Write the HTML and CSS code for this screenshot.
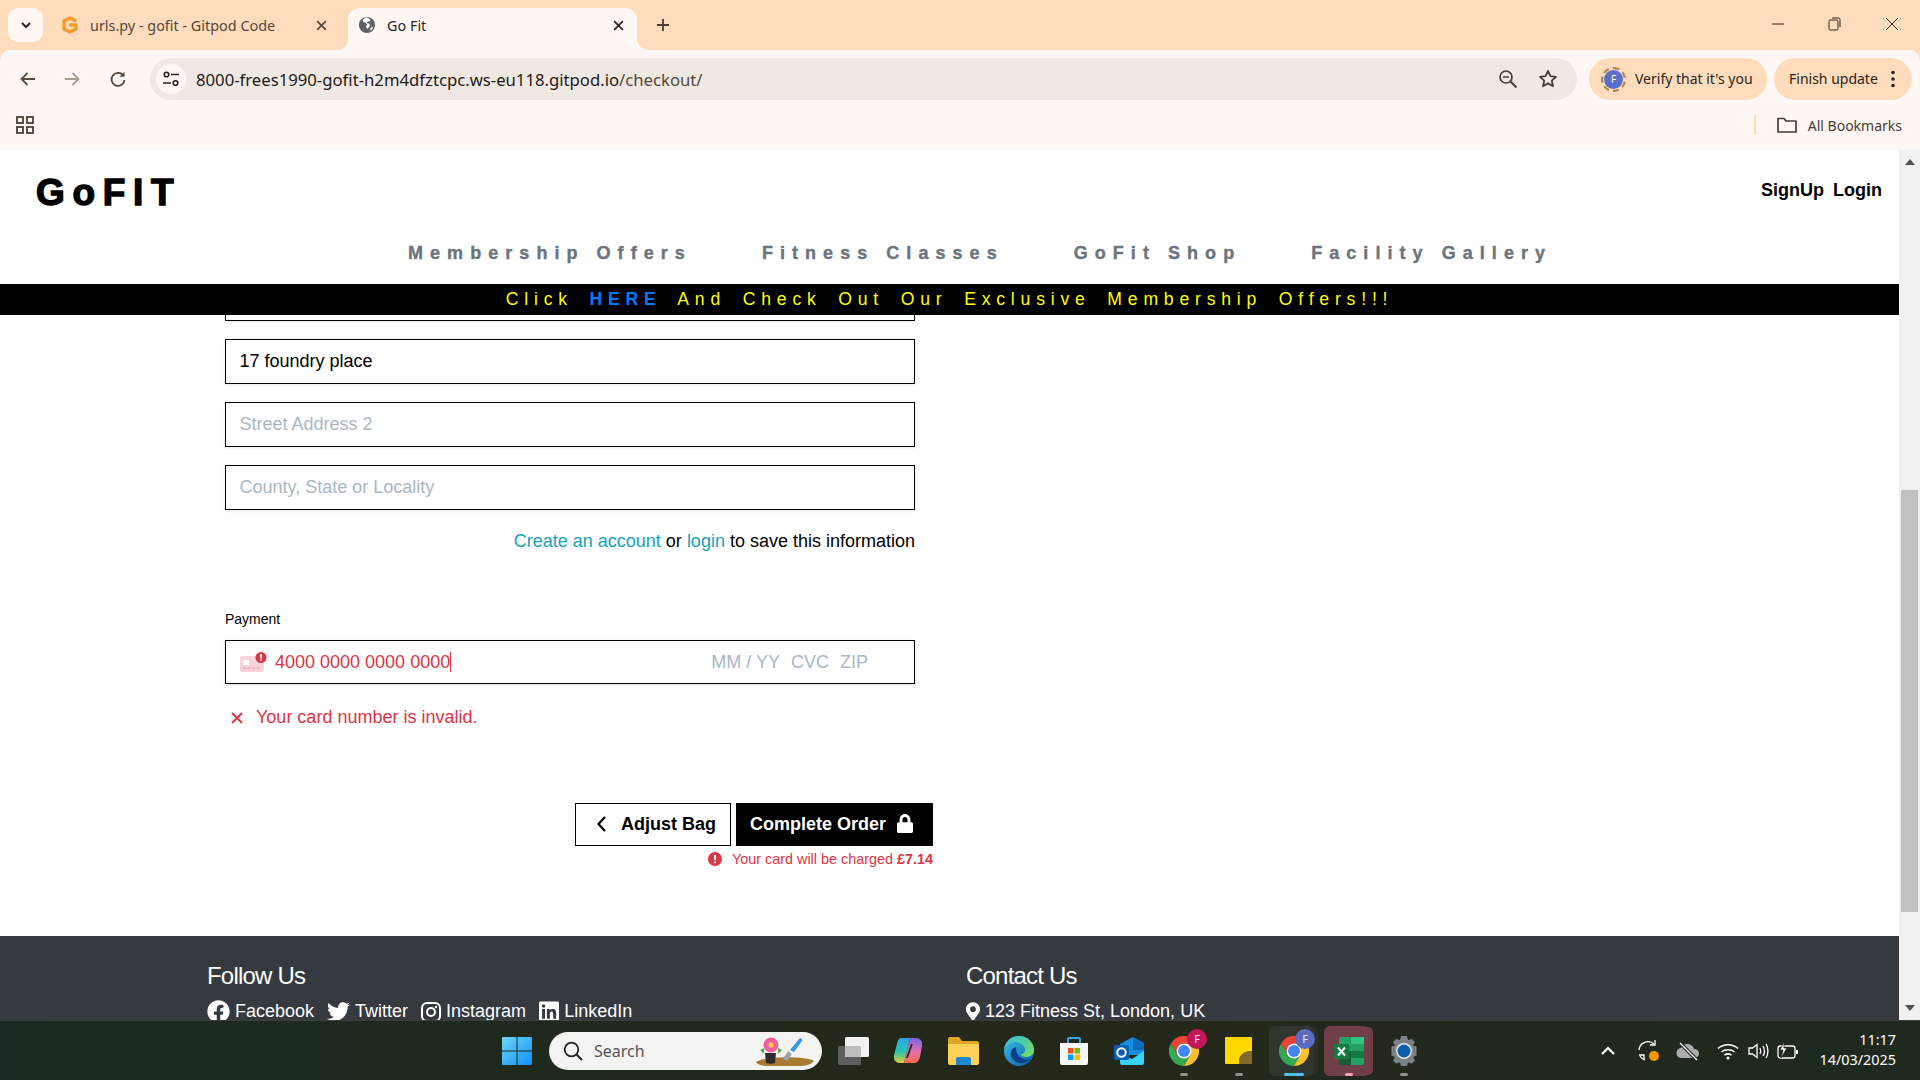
FILE: index.html
```html
<!DOCTYPE html>
<html lang="en">
<head>
<meta charset="utf-8">
<title>Go Fit</title>
<link rel="stylesheet" href="styles.css">
</head>
<body>
<div class="browser">
  <div class="tabstrip">
    <div class="tab-search"><svg width="14" height="14" viewBox="0 0 14 14"><path d="M3 5l4 4 4-4" fill="none" stroke="#2b2320" stroke-width="2"/></svg></div>
    <div class="tab tab-inactive">
      <svg class="favicon favicon-gitpod" viewBox="0 0 18 20"><path d="M14 5.500L9 3 3 6v8l6 3 6-3v-4H9.500" fill="none" stroke="#f79a2e" stroke-width="3.400" stroke-linejoin="round" stroke-linecap="round"/></svg>
      <span class="tab-title tab-title-dim">urls.py - gofit - Gitpod Code</span>
      <svg class="tab-close" viewBox="0 0 12 12"><path d="M2 2l8 8M10 2l-8 8" stroke="#5a4a3c" stroke-width="1.600"/></svg>
    </div>
    <div class="tab tab-active">
      <svg class="favicon" viewBox="0 0 20 20"><circle cx="10" cy="10" r="9" fill="#5f6368"/><path d="M10 1.500c-2 .6-4 1.600-5 3.200l1.200 2.300 2.500.6 1.300 2-1 2 1 2.500 1.500-.8 2-3-1-1.600-2.500-.8.800-1.700 2-.4 1.200-1.600zM15 12l1.800 1c-.6 1.400-1.600 2.500-2.800 3.300l-.4-2z" fill="#fff"/></svg>
      <span class="tab-title">Go Fit</span>
      <svg class="tab-close" viewBox="0 0 12 12"><path d="M2 2l8 8M10 2l-8 8" stroke="#2b2320" stroke-width="1.600"/></svg>
    </div>
    <svg class="new-tab" viewBox="0 0 14 14"><path d="M7 1v12M1 7h12" stroke="#4a3d33" stroke-width="1.800"/></svg>
    <div class="win-controls">
      <svg class="win-btn" viewBox="0 0 16 16"><path d="M2 8h12" stroke="#2b2320" stroke-width="1"/></svg>
      <svg class="win-btn" viewBox="0 0 16 16"><rect x="3" y="4" width="9" height="10" rx="1.500" fill="none" stroke="#2b2320"/><path d="M6 2h6.500A1.500 1.500 0 0 1 14 3.500V11" fill="none" stroke="#2b2320"/></svg>
      <svg class="win-btn" viewBox="0 0 16 16"><path d="M2 2l12 12M14 2L2 14" stroke="#2b2320" stroke-width="1"/></svg>
    </div>
  </div>
  <div class="toolbar">
    <div class="nav-btn"><svg width="18" height="18" viewBox="0 0 18 18"><path d="M16 9H3M8.500 3L2.500 9l6 6" fill="none" stroke="#5a4a3c" stroke-width="1.800"/></svg></div>
    <div class="nav-btn"><svg width="18" height="18" viewBox="0 0 18 18"><path d="M2 9h13M9.500 3l6 6-6 6" fill="none" stroke="#a99c92" stroke-width="1.800"/></svg></div>
    <div class="nav-btn nav-reload"><svg width="18" height="18" viewBox="0 0 18 18"><path d="M14.600 6A6.500 6.500 0 1 0 15.500 10" fill="none" stroke="#5a4a3c" stroke-width="1.800"/><path d="M15.500 1.800v5h-5z" fill="#5a4a3c"/></svg></div>
    <div class="omnibox">
      <div class="site-info"><svg width="18" height="18" viewBox="0 0 18 18"><circle cx="4.500" cy="4.500" r="2.300" fill="none" stroke="#2b2320" stroke-width="1.600"/><path d="M9 4.500h8M1 13h8" stroke="#2b2320" stroke-width="1.600"/><circle cx="13.500" cy="13" r="2.300" fill="none" stroke="#2b2320" stroke-width="1.600"/></svg></div>
      <span class="url">8000-frees1990-gofit-h2m4dfztcpc.ws-eu118.gitpod.io<span class="url-path">/checkout/</span></span>
      <svg class="omni-zoom" width="20" height="20" viewBox="0 0 20 20"><circle cx="8" cy="8" r="6" fill="none" stroke="#4a3d33" stroke-width="1.700"/><path d="M12.500 12.500l6 6" stroke="#4a3d33" stroke-width="1.900"/><path d="M5 8h6" stroke="#4a3d33" stroke-width="1.500"/></svg>
      <svg class="omni-star" width="20" height="20" viewBox="0 0 20 20"><path d="M10 2l2.400 5.200 5.600.6-4.200 3.800 1.200 5.600L10 14.400l-5 2.800 1.200-5.600L2 7.800l5.600-.6z" fill="none" stroke="#4a3d33" stroke-width="1.800" stroke-linejoin="round"/></svg>
    </div>
    <div class="pill pill-verify">
      <div class="avatar-ring"><span class="avatar">F</span></div>
      <span>Verify that it's you</span>
    </div>
    <div class="pill pill-update">
      <span>Finish update</span>
      <svg width="4" height="18" viewBox="0 0 4 18"><circle cx="2" cy="2.500" r="1.800" fill="#2b2320"/><circle cx="2" cy="9" r="1.800" fill="#2b2320"/><circle cx="2" cy="15.500" r="1.800" fill="#2b2320"/></svg>
    </div>
  </div>
  <div class="bookmarks">
    <svg width="18" height="18" viewBox="0 0 18 18"><g fill="none" stroke="#4a3d33" stroke-width="1.800"><rect x="1" y="1" width="6" height="6"/><rect x="11" y="1" width="6" height="6"/><rect x="1" y="11" width="6" height="6"/><rect x="11" y="11" width="6" height="6"/></g></svg>
    <div class="bm-divider"></div>
    <svg class="bm-folder" width="20" height="18" viewBox="0 0 20 18"><path d="M1 16V2.500h6l2 2.500h10v11z" fill="none" stroke="#4a3d33" stroke-width="1.700" stroke-linejoin="round"/></svg>
    <span class="bm-text">All Bookmarks</span>
  </div>
</div>

<div class="viewport">
  <div class="page">
    <header class="site-header">
      <div class="header-top">
        <a class="logo">GoFIT</a>
        <div class="account-links"><a>SignUp</a><a>Login</a></div>
      </div>
      <nav class="site-nav">
        <a>Membership Offers</a>
        <a>Fitness Classes</a>
        <a>GoFit Shop</a>
        <a>Facility Gallery</a>
      </nav>
      <div class="promo">Click <strong>HERE</strong> And Check Out Our Exclusive Membership Offers!!!</div>
    </header>
    <main class="content">
      <form class="checkout">
        <input class="field field-clipped" type="text" value="">
        <input class="field" type="text" value="17 foundry place">
        <input class="field" type="text" placeholder="Street Address 2">
        <input class="field" type="text" placeholder="County, State or Locality">
        <p class="save-note"><a>Create an account</a> or <a>login</a> to save this information</p>
        <p class="pay-label">Payment</p>
        <div class="card-box">
          <svg class="card-icon" width="27" height="20" viewBox="0 0 27 20"><rect y="4" width="24" height="16" rx="2" fill="#f7d4d9"/><rect x="3" y="8" width="6" height="5" fill="#fff"/><path d="M3 16h18" stroke="#ecaab3" stroke-width="1.500" stroke-dasharray="3 1.500"/><circle cx="21" cy="5.500" r="5.500" fill="#dc3545"/><path d="M21 2v4.500M21 7.500v1.500" stroke="#fff" stroke-width="1.800"/></svg>
          <span class="card-number"><span class="caret">4000 0000 0000 0000</span></span>
          <span class="card-ph">MM / YY</span>
          <span class="card-ph">CVC</span>
          <span class="card-ph">ZIP</span>
        </div>
        <div class="card-error">
          <svg width="12" height="12" viewBox="0 0 12 12"><path d="M1 1l10 10M11 1L1 11" stroke="#dc3545" stroke-width="2"/></svg>
          <span>Your card number is invalid.</span>
        </div>
        <div class="actions">
          <a class="btn btn-outline"><svg width="11" height="18" viewBox="0 0 11 18"><path d="M9 2L2.500 9 9 16" fill="none" stroke="#000" stroke-width="2.200"/></svg><span>Adjust Bag</span></a>
          <a class="btn btn-solid"><span>Complete Order</span><svg width="16" height="19" viewBox="0 0 448 512" preserveAspectRatio="none"><path fill="#fff" d="M400 224h-24v-72C376 68.200 307.800 0 224 0S72 68.200 72 152v72H48c-26.500 0-48 21.500-48 48v192c0 26.500 21.500 48 48 48h352c26.500 0 48-21.500 48-48V272c0-26.500-21.500-48-48-48zm-104 0H152v-72c0-39.700 32.300-72 72-72s72 32.300 72 72v72z"/></svg></a>
        </div>
        <div class="charge-note">
          <svg width="14" height="14" viewBox="0 0 14 14"><circle cx="7" cy="7" r="7" fill="#dc3545"/><path d="M7 3v5M7 9.500v1.800" stroke="#fff" stroke-width="2"/></svg>
          <span>Your card will be charged <strong>£7.14</strong></span>
        </div>
      </form>
      <footer class="site-footer">
        <div class="footer-col">
          <h3>Follow Us</h3>
          <div class="social">
            <a><svg width="23" height="23" viewBox="0 0 512 512"><path fill="#fff" d="M504 256C504 119 393 8 256 8S8 119 8 256c0 123.780 90.690 226.380 209.250 245V327.690h-63V256h63v-54.640c0-62.150 37-96.480 93.670-96.480 27.140 0 55.520 4.840 55.520 4.840v61h-31.280c-30.800 0-40.410 19.120-40.410 38.730V256h68.780l-11 71.690h-57.780V501C413.310 482.380 504 379.780 504 256z"/></svg>Facebook</a>
            <a><svg width="23" height="23" viewBox="0 0 512 512"><path fill="#fff" d="M459.370 151.716c.325 4.548.325 9.097.325 13.645 0 138.720-105.583 298.558-298.558 298.558-59.452 0-114.680-17.219-161.137-47.106 8.447.974 16.568 1.299 25.340 1.299 49.055 0 94.213-16.568 130.274-44.832-46.132-.975-84.792-31.188-98.112-72.772 6.498.974 12.995 1.624 19.818 1.624 9.421 0 18.843-1.300 27.614-3.573-48.081-9.747-84.143-51.980-84.143-102.985v-1.299c13.969 7.797 30.214 12.670 47.431 13.319-28.264-18.843-46.781-51.005-46.781-87.391 0-19.492 5.197-37.360 14.294-52.954 51.655 63.675 129.300 105.258 216.365 109.807-1.624-7.797-2.599-15.918-2.599-24.040 0-57.828 46.782-104.934 104.934-104.934 30.213 0 57.502 12.670 76.670 33.137 23.715-4.548 46.456-13.320 66.599-25.340-7.798 24.366-24.366 44.833-46.132 57.827 21.117-2.273 41.584-8.122 60.426-16.243-14.292 20.791-32.161 39.308-52.628 54.253z"/></svg>Twitter</a>
            <a><svg width="20" height="22" viewBox="0 0 20 20"><rect x="1" y="1" width="18" height="18" rx="5" fill="none" stroke="#fff" stroke-width="2"/><circle cx="10" cy="10" r="4" fill="none" stroke="#fff" stroke-width="2"/><circle cx="15" cy="5" r="1.200" fill="#fff"/></svg>Instagram</a>
            <a><svg width="20" height="23" viewBox="0 0 448 512"><path fill="#fff" d="M416 32H31.900C14.300 32 0 46.500 0 64.300v383.400C0 465.500 14.300 480 31.900 480H416c17.600 0 32-14.500 32-32.300V64.300c0-17.800-14.400-32.300-32-32.300zM135.400 416H69V202.200h66.500V416zm-33.200-243c-21.300 0-38.500-17.300-38.500-38.500S80.900 96 102.200 96c21.200 0 38.500 17.300 38.500 38.500 0 21.300-17.200 38.500-38.500 38.500zm282.100 243h-66.400V312c0-24.800-.5-56.700-34.500-56.700-34.600 0-39.900 27-39.900 54.900V416h-66.400V202.200h63.700v29.200h.9c8.900-16.800 30.600-29.300 62.900-29.300 67.200 0 79.700 44.300 79.700 101.900V416z"/></svg>LinkedIn</a>
          </div>
        </div>
        <div class="footer-col">
          <h3>Contact Us</h3>
          <div class="social">
            <a><svg width="14" height="19" viewBox="0 0 384 512"><path fill="#fff" d="M172.268 501.670C26.970 291.031 0 269.413 0 192 0 85.961 85.961 0 192 0s192 85.961 192 192c0 77.413-26.970 99.031-172.268 309.670-9.535 13.774-29.930 13.773-39.464 0zM192 272c44.183 0 80-35.817 80-80s-35.817-80-80-80-80 35.817-80 80 35.817 80 80 80z"/></svg>123 Fitness St, London, UK</a>
          </div>
        </div>
      </footer>
    </main>
  </div>
  <aside class="scrollbar">
    <span class="arrow arrow-up"></span>
    <span class="thumb"></span>
    <span class="arrow arrow-down"></span>
  </aside>
</div>

<div class="taskbar">
  <div class="tb-item"><svg width="30" height="30" viewBox="0 0 30 30"><defs><linearGradient id="win" x1="0" y1="0" x2="1" y2="1"><stop offset="0" stop-color="#6fd6ff"/><stop offset="1" stop-color="#0f8fef"/></linearGradient></defs><path d="M1 1h13.500v13.500H0V2a1 1 0 0 1 1-1zM15.500 1H29a1 1 0 0 1 1 1v12.500H15.500zM0 15.500h14.500V29H1a1 1 0 0 1-1-1zM15.500 15.500H30V28a1 1 0 0 1-1 1H15.500z" fill="url(#win)"/></svg></div>
  <div class="tb-search">
    <svg width="20" height="20" viewBox="0 0 20 20"><circle cx="8.500" cy="8.500" r="6.800" fill="none" stroke="#222" stroke-width="1.800"/><path d="M13.500 13.500l5.500 5.500" stroke="#222" stroke-width="2"/></svg>
    <span>Search</span>
    <svg class="tb-art" width="62" height="32" viewBox="0 0 62 32"><path d="M2 27c8-6 50-6 58-1-3 4-10 5-14 5H14C9 31 4 30 2 27z" fill="#a97a32"/><path d="M29 24l5-8 4 3-5 7z" fill="#9aa5ad"/><path d="M36 15l9-11c2-2 4 0 3 2l-8 11z" fill="#3b94dc"/><path d="M10 13l-4 2 4 4zM24 13l4 2-4 4z" fill="#4caf50"/><path d="M11 18h11l-1 10c-3 1-6 1-9 0z" fill="#2e2b2a"/><circle cx="17" cy="10" r="7.500" fill="#f0609a"/><circle cx="17" cy="10" r="2.500" fill="#f6cf4f"/></svg>
  </div>
  <div class="tb-item tb-after-search"><svg width="31" height="28" viewBox="0 0 31 28"><rect y="9" width="23" height="19" rx="1.500" fill="#5d5d5d"/><rect x="7" width="24" height="20" rx="1.500" fill="#f1f1f1"/><rect x="7" y="9" width="16" height="11" fill="#bdbdbd"/></svg></div>
  <div class="tb-item"><svg width="29" height="27" viewBox="0 0 29 27"><defs><linearGradient id="cp1" x1="0" y1="0" x2="0" y2="1"><stop offset="0" stop-color="#2ba5f0"/><stop offset=".55" stop-color="#25c7b0"/><stop offset="1" stop-color="#e8c93a"/></linearGradient><linearGradient id="cp2" x1="0" y1="0" x2="0" y2="1"><stop offset="0" stop-color="#7a63e6"/><stop offset=".55" stop-color="#e56fb0"/><stop offset="1" stop-color="#fb6b4c"/></linearGradient></defs><path d="M8 1h8l-6 25H6c-4 0-7-3-6-8L3 7c1-4 2-6 5-6z" fill="url(#cp1)"/><path d="M16 1h6c4 0 7 3 6 8l-2 11c-1 4-3 6-6 6h-10z" fill="url(#cp2)"/><path d="M17 7l-5 14h1.800l5-14z" fill="#20291c"/></svg></div>
  <div class="tb-item"><svg width="31" height="28" viewBox="0 0 31 28"><path d="M0 2a2 2 0 0 1 2-2h9l3 4h15a2 2 0 0 1 2 2v4H0z" fill="#e0a526"/><path d="M0 7h31v19a2 2 0 0 1-2 2H2a2 2 0 0 1-2-2z" fill="#ffd158"/><path d="M8 22a2 2 0 0 1 2-2h11a2 2 0 0 1 2 2v6H8z" fill="#1e88d2"/></svg></div>
  <div class="tb-item"><svg width="30" height="30" viewBox="0 0 30 30"><defs><linearGradient id="ed" x1="0" y1="0" x2="1" y2="1"><stop offset="0" stop-color="#36c4e8"/><stop offset="1" stop-color="#0c59a4"/></linearGradient><linearGradient id="ed2" x1="0" y1="0" x2="1" y2="1"><stop offset="0" stop-color="#33bfe0"/><stop offset="1" stop-color="#7bdc5b"/></linearGradient></defs><circle cx="15" cy="15" r="15" fill="url(#ed)"/><path d="M15 0c9 0 15 7 15 14 0 5-4 7-8 7-3 0-5-1-5-3 2 0 4-1 4-4 0-5-5-8-10-8C7 6 3 8 0 13 1 6 7 0 15 0z" fill="url(#ed2)"/><path d="M12 11c-4 1-6 4-5 9 1 4 5 7 11 7 3 0 6-1 8-4-3 1-6 1-9-1-3-2-5-5-5-11z" fill="#0b3f8a"/></svg></div>
  <div class="tb-item"><svg width="30" height="30" viewBox="0 0 30 30"><path d="M9 7V3a1 1 0 0 1 1-1h10a1 1 0 0 1 1 1v4" fill="none" stroke="#2fa8e0" stroke-width="2"/><path d="M1 7h28v20a2 2 0 0 1-2 2H3a2 2 0 0 1-2-2z" fill="#f7f7f7"/><rect x="9" y="12" width="5.500" height="5.500" fill="#f25022"/><rect x="15.500" y="12" width="5.500" height="5.500" fill="#7fba00"/><rect x="9" y="18.500" width="5.500" height="5.500" fill="#00a4ef"/><rect x="15.500" y="18.500" width="5.500" height="5.500" fill="#ffb900"/></svg></div>
  <div class="tb-item"><svg width="30" height="28" viewBox="0 0 30 28"><path d="M6 7l13-7 11 6v12H6z" fill="#1490df"/><path d="M19 0l11 6v7H19z" fill="#0f6cbd"/><path d="M6 16l12 6 12-8v12a2 2 0 0 1-2 2H8a2 2 0 0 1-2-2z" fill="#38d2f5"/><rect y="8" width="15" height="15" rx="1.500" fill="#0a5fb0"/><circle cx="7.500" cy="15.500" r="4.200" fill="none" stroke="#fff" stroke-width="2"/></svg></div>
  <div class="tb-item tb-badged">
    <svg width="30" height="30" viewBox="0 0 48 48"><path d="M3.200 12A24 24 0 0 0 24 48L34.400 30H13.600z" fill="#34a853"/><path d="M44.800 12H24l10.400 18L24 48A24 24 0 0 0 44.800 12z" fill="#fbc02d"/><path d="M3.200 12A24 24 0 0 1 44.800 12H24a12 12 0 0 0-10.400 18z" fill="#ea4335"/><circle cx="24" cy="24" r="12" fill="#fff"/><circle cx="24" cy="24" r="9.500" fill="#4285f4"/></svg>
    <span class="badge badge-pink">F</span>
    <span class="indicator"></span>
  </div>
  <div class="tb-item"><svg width="27" height="27" viewBox="0 0 27 27"><path d="M1 0h25a1 1 0 0 1 1 1v16L17 27H1a1 1 0 0 1-1-1V1a1 1 0 0 1 1-1z" fill="#ffd800"/><path d="M27 14v12a1 1 0 0 1-1 1H14v-3c0-5 4-10 13-10z" fill="#3a3a3a"/><path d="M27 14c-9 0-13 5-13 10v3h12a1 1 0 0 0 1-1z" fill="#c8971a" opacity=".5"/></svg><span class="indicator"></span></div>
  <div class="tb-item tb-badged tb-open">
    <svg width="30" height="30" viewBox="0 0 48 48"><path d="M3.200 12A24 24 0 0 0 24 48L34.400 30H13.600z" fill="#34a853"/><path d="M44.800 12H24l10.400 18L24 48A24 24 0 0 0 44.800 12z" fill="#fbc02d"/><path d="M3.200 12A24 24 0 0 1 44.800 12H24a12 12 0 0 0-10.400 18z" fill="#ea4335"/><circle cx="24" cy="24" r="12" fill="#fff"/><circle cx="24" cy="24" r="9.500" fill="#4285f4"/></svg>
    <span class="badge badge-blue">F</span>
    <span class="indicator indicator-active"></span>
  </div>
  <div class="tb-item tb-excel">
    <svg width="30" height="28" viewBox="0 0 30 28"><rect x="5" width="25" height="28" rx="2" fill="#21a366"/><rect x="17" width="13" height="7" fill="#33c481"/><rect x="17" y="14" width="13" height="7" fill="#107c41"/><rect x="5" y="14" width="12" height="14" fill="#185c37"/><rect y="7" width="15" height="15" rx="1.500" fill="#107c41"/><path d="M4 10.500l7 8M11 10.500l-7 8" stroke="#fff" stroke-width="2"/></svg>
    <span class="indicator indicator-pink"></span>
  </div>
  <div class="tb-item"><svg width="30" height="30" viewBox="0 0 30 30"><path d="M12 0h6l1 4 4-1 3 3-2 3.500 3.500 1v9L24 21l2 3.500-3 3-4-1-1 3.500h-6l-1-3.500-4 1-3-3L6 21l-3.500-1.500v-9l3.500-1L4 6l3-3 4 1z" fill="#7a8288"/><circle cx="15" cy="15" r="8" fill="#e6e6e6"/><circle cx="15" cy="15" r="6.500" fill="#0f5eaa"/></svg><span class="indicator"></span></div>
  <div class="tray">
    <svg class="tray-chevron" width="16" height="10" viewBox="0 0 16 10"><path d="M2 8l6-6 6 6" fill="none" stroke="#fff" stroke-width="2"/></svg>
    <svg class="tray-sync" width="24" height="24" viewBox="0 0 24 24"><path d="M2 11a9 9 0 0 1 15-6M3 17a9 9 0 0 0 5 4" fill="none" stroke="#fff" stroke-width="1.300"/><path d="M18 1v5h-5M2 16h5v5" fill="none" stroke="#fff" stroke-width="1.300"/><circle cx="17" cy="17" r="5" fill="#f59b00"/></svg>
    <svg class="tray-cloud" width="24" height="20" viewBox="0 0 24 20"><path d="M6 17a5 5 0 0 1-1-10 7 7 0 0 1 13 1 4.500 4.500 0 0 1 1 9z" fill="#a9adab"/><path d="M4 2l17 17" stroke="#22291e" stroke-width="3.500"/><path d="M4 2l17 17" stroke="#fff" stroke-width="1.200"/></svg>
    <svg class="tray-wifi" width="22" height="18" viewBox="0 0 22 18"><g fill="none" stroke="#fff" stroke-width="1.500"><path d="M1 6.500c5.500-5 14.500-5 20 0"/><path d="M4.500 10c3.500-3 9.500-3 13 0"/><path d="M7.500 13.200c2-1.500 5-1.500 7 0"/></g><circle cx="11" cy="16" r="1.500" fill="#fff"/></svg>
    <svg class="tray-vol" width="22" height="18" viewBox="0 0 22 18"><path d="M1 6h3.500L9 2.500v13L4.500 12H1z" fill="none" stroke="#fff" stroke-width="1.300"/><path d="M12 6c1 2 1 4 0 6M15 4c1.800 3 1.800 7 0 10M18 2c2.600 4 2.600 10 0 14" fill="none" stroke="#fff" stroke-width="1.300"/></svg>
    <svg class="tray-bat" width="22" height="18" viewBox="0 0 22 18"><rect x="1" y="4" width="17" height="12" rx="2.500" fill="none" stroke="#fff" stroke-width="1.300"/><rect x="19" y="8" width="2" height="4" fill="#fff"/><path d="M7 0L3 8h3l-2 8 6-10H7z" fill="#fff" stroke="#22291e" stroke-width=".8"/></svg>
    <div class="clock"><span>11:17</span><span>14/03/2025</span></div>
  </div>
</div>
</body>
</html>
```
FILE: styles.css
```css
* { box-sizing: border-box; }
html, body { margin: 0; height: 1080px; overflow: hidden; }
body {
  display: flex;
  flex-direction: column;
  width: 1920px;
  font-family: "Liberation Sans", Arial, sans-serif;
  color: #000;
  background: #fff;
}

/* Browser chrome */
.browser { background: #ffdcbb; font-family: "Noto Sans", sans-serif; color: #2b2320; }
.tabstrip { height: 50px; display: flex; align-items: flex-start; padding: 8px 20px 0 8px; }
.tab-search {
  width: 35px; height: 34px; border-radius: 10px; background: #fff7f3;
  display: flex; align-items: center; justify-content: center;
}
.tab { height: 42px; display: flex; align-items: center; font-size: 14.400px; position: relative; }
.tab-inactive { width: 291px; margin-left: 5px; padding: 0 11px 8px 13px; }
.tab-active {
  width: 289px; margin-left: 9px; padding: 0 12px 8px 10px;
  background: #fff7f3; border-radius: 12px 12px 0 0;
}
.tab-active::before, .tab-active::after {
  content: ""; position: absolute; bottom: 0; width: 12px; height: 12px;
}
.tab-active::before { left: -12px; background: radial-gradient(circle at 0 0, transparent 12px, #fff7f3 12.500px); }
.tab-active::after { right: -12px; background: radial-gradient(circle at 100% 0, transparent 12px, #fff7f3 12.500px); }
.favicon { width: 18px; height: 18px; flex: none; }
.favicon-gitpod { height: 20px; }
.tab-title { margin-left: 11px; flex: 1; white-space: nowrap; }
.tab-title-dim { color: #54483e; }
.tab-close { width: 13px; height: 13px; flex: none; }
.new-tab { width: 14px; height: 14px; margin: 10px 0 0 19px; }
.win-controls { margin-left: auto; display: flex; gap: 40px; margin-top: 8px; }
.win-btn { width: 16px; height: 16px; }
.win-btn:last-child { margin-left: 2px; }

.toolbar {
  height: 58px; display: flex; align-items: center; padding: 8px 0 8px 6px;
  background: #fff7f3; border-radius: 10px 10px 0 0;
}
.nav-btn { width: 44px; height: 42px; display: flex; align-items: center; justify-content: center; }
.nav-reload { margin-left: 2px; }
.omnibox {
  width: 1427px; height: 42px; margin-left: 10px; padding: 0 19px 0 6px;
  background: #f0e8e3; border-radius: 21px; display: flex; align-items: center;
}
.site-info {
  width: 30px; height: 30px; border-radius: 50%; background: #fff7f3;
  display: flex; align-items: center; justify-content: center;
}
.url { margin: 1px 0 0 10px; font-size: 16.700px; white-space: nowrap; color: #1f1a17; }
.url-path { color: #54483e; }
.omni-zoom { margin-left: auto; }
.omni-star { margin-left: 20px; }
.pill {
  height: 42px; border-radius: 21px; background: #ffdcbb; display: flex; align-items: center;
  font-size: 14px; white-space: nowrap;
}
.pill > span { margin-bottom: 2px; }
.pill-verify { width: 178px; margin-left: 12px; padding-left: 12px; gap: 9px; }
.pill-update { width: 138px; margin-left: 7px; padding-left: 15px; gap: 13px; }
.avatar-ring {
  width: 25px; height: 25px; border-radius: 50%; border: 2px dashed #a98457;
  display: flex; align-items: center; justify-content: center;
}
.avatar {
  width: 19px; height: 19px; border-radius: 50%; background: #5a6fc9; color: #fff;
  font-size: 10px; display: flex; align-items: center; justify-content: center;
}
.bookmarks {
  height: 42px; display: flex; align-items: center; padding: 0 18px 8px 16px;
  background: #fff7f3; font-size: 14px; color: #4a3d33;
}
.bm-divider { width: 2px; height: 20px; margin-left: auto; background: #ffdcbb; }
.bm-folder { margin-left: 21px; }
.bm-text { margin-left: 11px; white-space: nowrap; }

/* Page viewport */
.viewport { height: 870px; display: flex; background: #fff; overflow: hidden; }
.page { flex: 1; min-width: 0; display: flex; flex-direction: column; height: 870px; }
.scrollbar { width: 21px; background: #f1f1f1; display: flex; flex-direction: column; align-items: center; }
.arrow { width: 0; height: 0; border-left: 5px solid transparent; border-right: 5px solid transparent; }
.arrow-up { margin-top: 9px; border-bottom: 6px solid #505050; }
.arrow-down { margin: auto 0 9px; border-top: 6px solid #505050; }
.thumb { width: 17px; height: 422px; margin-top: 325px; background: #c1c1c1; }

.site-header { flex: none; }
.header-top { height: 85px; display: flex; align-items: center; justify-content: space-between; padding: 0 17px 0 36px; }
.logo {
  font-size: 37px; font-weight: 700; letter-spacing: 7.700px; line-height: 1; color: #000;
  -webkit-text-stroke: 1.400px #000;
}
.account-links { display: flex; gap: 9px; font-size: 18px; font-weight: 700; margin-bottom: 4px; }
.site-nav {
  height: 49px; padding: 0 0 13px 408px; display: flex; align-items: center; gap: 70px;
  font-size: 18px; font-weight: 700; letter-spacing: 7.050px; color: #6c757d; white-space: nowrap;
  -webkit-text-stroke: .4px #6c757d;
}
.promo {
  height: 31px; background: #000; color: #ffff00; line-height: 31px; text-align: center;
  font-size: 17.600px; letter-spacing: 5.800px; word-spacing: 6px; white-space: pre;
}
.promo strong { color: #007bff; }

.content { flex: 1; min-height: 0; overflow: hidden; }
.checkout { width: 708px; margin-left: 225px; display: flex; flex-direction: column; }
.field {
  width: 690px; height: 45px; margin-bottom: 18px; padding: 0 13.500px;
  border: 1.500px solid #000; border-radius: 0; outline: none; background: #fff;
  font: 18px "Liberation Sans", Arial, sans-serif; color: #000;
  box-shadow: 0 1px 3px rgba(50, 50, 93, .1);
}
.field::placeholder { color: #aab7c4; opacity: 1; }
.field-clipped { margin-top: -39px; }
.save-note { width: 690px; margin: 0; text-align: right; font-size: 18px; line-height: 27px; }
.save-note a { color: #17a2b8; }
.pay-label { margin: 54px 0 10px; font-size: 14px; line-height: 21px; }
.card-box {
  width: 690px; height: 44px; display: flex; align-items: center; padding: 0 46px 0 14px;
  border: 1.500px solid #000; font-size: 18px; box-shadow: 0 1px 3px rgba(50, 50, 93, .15);
}
.card-icon { flex: none; }
.card-number { flex: 1; margin-left: 8px; color: #dc3545; }
.caret { border-right: 1px solid #dc3545; }
.card-ph { color: #aab7c4; margin-left: 11px; }
.card-error { display: flex; align-items: center; gap: 13px; margin-top: 20px; padding-left: 6px; height: 27px; font-size: 18px; color: #dc3545; }
.actions { display: flex; justify-content: flex-end; gap: 5px; margin-top: 72px; }
.btn { height: 43px; display: flex; align-items: center; font-size: 18px; font-weight: 700; white-space: nowrap; }
.btn svg { margin-bottom: 2px; }
.btn-outline { width: 156px; gap: 14px; padding-left: 20px; border: 1.500px solid #000; color: #000; background: #fff; }
.btn-solid { width: 197px; gap: 11px; padding-left: 14px; background: #000; color: #fff; }
.charge-note {
  display: flex; justify-content: flex-end; align-items: center; gap: 10px;
  height: 20px; margin-top: 3px; font-size: 14.400px; color: #dc3545; white-space: nowrap;
}

.site-footer {
  height: 200px; margin-top: 67px; padding: 25px 0 0 207px; display: grid; grid-template-columns: 759px 1fr;
  background: #343a40; color: #fff;
}
.footer-col h3 { margin: 0 0 8px; font-size: 24px; font-weight: 400; line-height: 29px; letter-spacing: -.8px; }
.social { display: flex; gap: 13px; font-size: 18px; line-height: 27px; white-space: nowrap; }
.social a { display: flex; align-items: center; gap: 5px; }

/* Windows taskbar */
.taskbar {
  height: 60px; display: flex; padding-left: 489px; align-items: center; position: relative;
  border-top: 1px solid #3c403a; font-family: "Noto Sans", sans-serif;
  background: linear-gradient(90deg, #1b2a20 0%, #20291c 35%, #24281a 55%, #1e2a1e 100%);
}
.tb-item {
  width: 55px; height: 50px; display: flex; align-items: center; justify-content: center; position: relative; flex: none;
}
.tb-search {
  width: 273px; height: 38px; margin-left: 5px; padding-left: 14px; border-radius: 19px; background: #f3f3f1;
  display: flex; align-items: center; gap: 11px; font-size: 16px; color: #555; flex: none;
}
.tb-art { margin-left: auto; margin-right: 6px; }
.tb-after-search { margin-left: 4px; }
.badge {
  position: absolute; top: 3px; right: 4px; width: 20px; height: 20px; border-radius: 50%;
  display: flex; align-items: center; justify-content: center; font-size: 11px; color: #f3d7e3;
}
.badge-pink { background: #c2185b; }
.badge-blue { background: #5c6bc0; color: #e3e6f7; }
.tb-open .badge { left: 26px; right: auto; }
.indicator {
  position: absolute; bottom: 0; left: 50%; width: 8px; height: 3px; margin-left: -4px; border-radius: 2px; background: #8e928c;
}
.indicator-active { width: 20px; margin-left: -10px; background: #4cc2ff; }
.indicator-pink { background: #f4a3b3; }
.tb-open, .tb-excel { width: 45px; margin: 0 7px 0 3px; padding-left: 10px; justify-content: flex-start; border-radius: 6px; }
.tb-open .indicator, .tb-excel .indicator { left: 25px; }
.tb-open { background: #2e362e; box-shadow: 5px 0 0 -1px #293029; }
.tb-excel { background: #6f3e47; box-shadow: 5px 0 0 -1px #6f3e47; }
.tray { margin-left: auto; display: flex; align-items: center; padding-right: 24px; color: #fff; }
.tray-sync { margin-left: 21px; }
.tray-cloud { margin-left: 15px; }
.tray-wifi { margin-left: 17px; }
.tray-vol { margin-left: 9px; }
.tray-bat { margin-left: 7px; }
.clock { width: 85px; margin: 0 0 2px 12px; display: flex; flex-direction: column; align-items: flex-end; font-size: 14.400px; line-height: 20px; }
```
